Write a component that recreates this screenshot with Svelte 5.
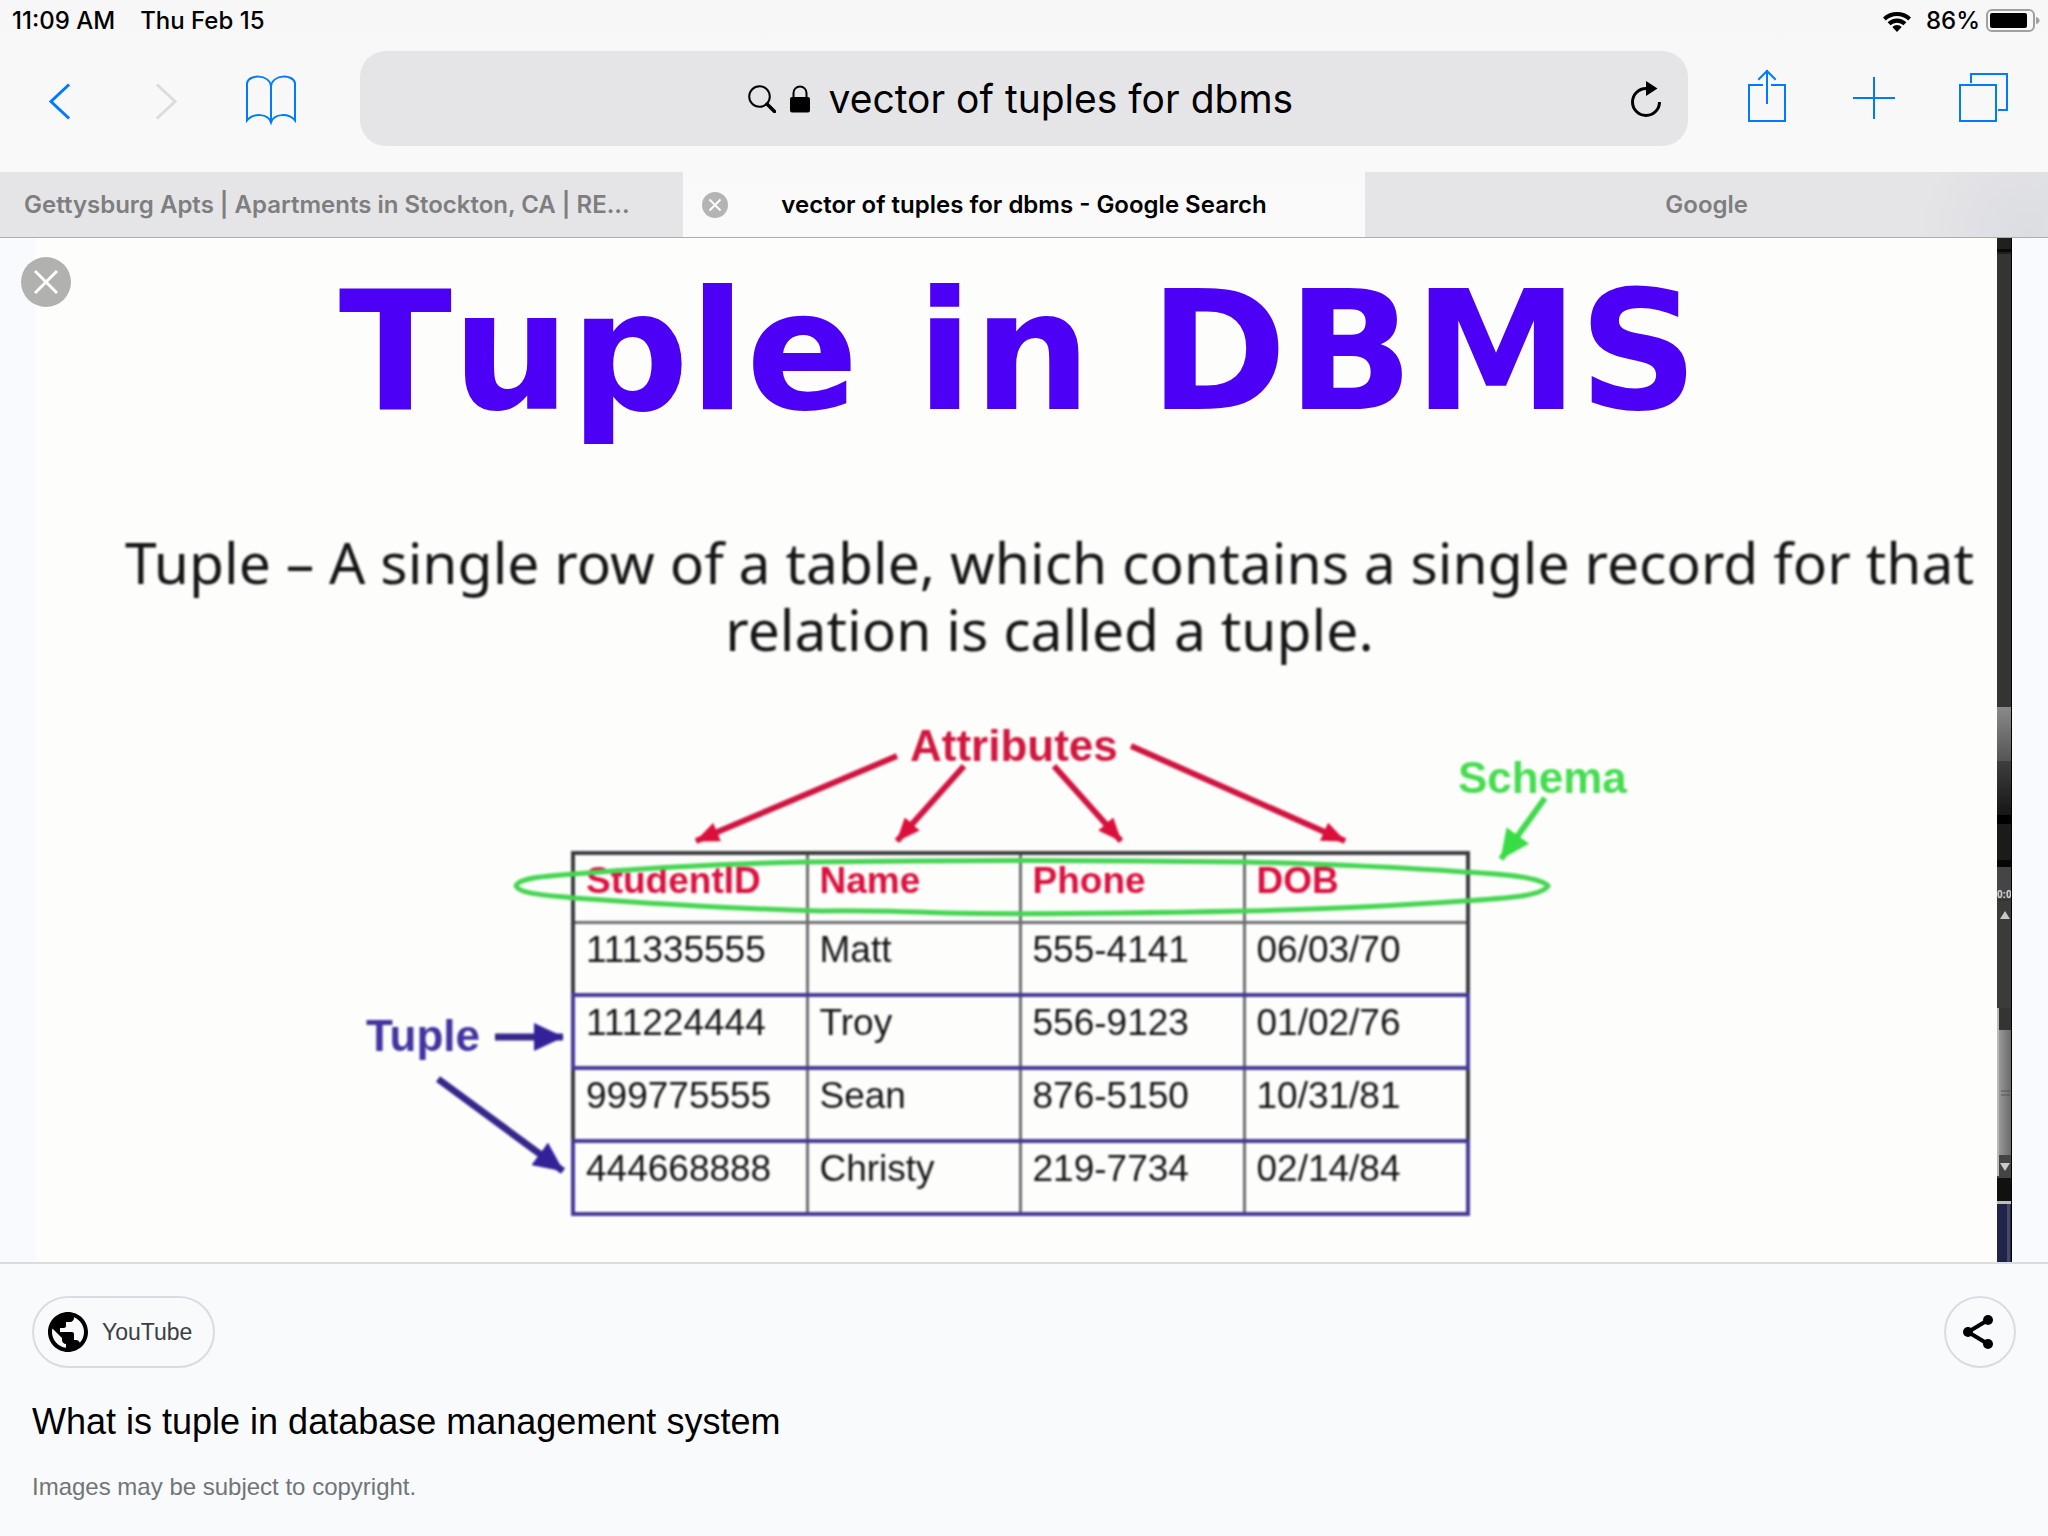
<script>
  const columns = ['StudentID', 'Name', 'Phone', 'DOB'];
  const rows = [
    { cells: ['111335555', 'Matt', '555-4141', '06/03/70'], tuple: false },
    { cells: ['111224444', 'Troy', '556-9123', '01/02/76'], tuple: true },
    { cells: ['999775555', 'Sean', '876-5150', '10/31/81'], tuple: false },
    { cells: ['444668888', 'Christy', '219-7734', '02/14/84'], tuple: true }
  ];
  let query = $state('vector of tuples for dbms');
</script>

<div class="page">
  <header>
    <div class="status">
      <div class="when"><span>11:09 AM</span><span>Thu Feb 15</span></div>
      <div class="power">
        <svg width="30" height="22" viewBox="0 0 30 22" aria-label="Wi-Fi">
          <path d="M1 7.6a20 20 0 0 1 28 0l-2.8 3a16 16 0 0 0-22.400 0z" />
          <path d="M5.600 12.300a13.400 13.400 0 0 1 18.800 0l-2.900 3a9.300 9.300 0 0 0-13 0z" />
          <path d="M10.300 17a6.700 6.700 0 0 1 9.400 0L15 22z" />
        </svg>
        <span>86%</span>
        <svg width="54" height="24" viewBox="0 0 54 24" aria-label="Battery">
          <rect x="1" y="1" width="47" height="21" rx="5" fill="none" stroke="#a0a0a0" stroke-width="2" />
          <rect x="4" y="4" width="37" height="15" rx="2" />
          <path d="M50 8q3.500 1 3.500 3.500T50 15z" fill="#a0a0a0" />
        </svg>
      </div>
    </div>

    <div class="toolbar">
      <nav class="tools left">
        <button aria-label="Back">
          <svg width="60" height="60" viewBox="0 0 60 60"><path d="M38 16.500 21 32.500l17 16" stroke-width="3" /></svg>
        </button>
        <button aria-label="Forward" disabled>
          <svg width="60" height="60" viewBox="0 0 60 60"><path d="M22 16.500 39 32.500l-17 16" stroke-width="3" /></svg>
        </button>
        <button aria-label="Bookmarks">
          <svg width="60" height="60" viewBox="0 0 60 60">
            <path d="M29 17v36M29 17C27 5 7 5 5 14v37.500C11 44 26 44 29 53.500 32 44 47 44 53 51.500V14C51 5 31 5 29 17z" />
          </svg>
        </button>
      </nav>
      <div class="address">
        <div class="query">
          <svg width="28" height="28" viewBox="0 0 28 28"><circle cx="11.500" cy="11.500" r="10.300" fill="none" stroke="#000" stroke-width="2" /><path d="m19 19 7.500 7.500" stroke="#000" stroke-width="3.500" stroke-linecap="round" /></svg>
          <svg width="22" height="28" viewBox="0 0 22 28"><path d="M4.500 13V8a6.500 6.500 0 0 1 13 0v5" fill="none" stroke="#000" stroke-width="2" /><rect x="1" y="12" width="20" height="15.500" rx="2" /></svg>
          <input type="text" aria-label="Address" bind:value={query} />
        </div>
        <button class="reload" aria-label="Reload">
          <svg width="34" height="38" viewBox="0 0 34 38"><path d="M17 8.500A13.500 13.500 0 1 0 30.500 22" fill="none" stroke="#000" stroke-width="3" /><path d="M17 1v15l11.500-7.500z" /></svg>
        </button>
      </div>
      <nav class="tools right">
        <button aria-label="Share page">
          <svg width="60" height="60" viewBox="0 0 60 60"><path d="M25 16H12v36h36V16H35M30 2v32M22 10l8-8 8 8" /></svg>
        </button>
        <button aria-label="New tab">
          <svg width="60" height="60" viewBox="0 0 60 60"><path d="M29 9v40M9 29h40" /></svg>
        </button>
        <button aria-label="All tabs">
          <svg width="60" height="60" viewBox="0 0 60 60"><path d="M7 16h36v36H7zM18 13V5h36v36h-8" /></svg>
        </button>
      </nav>
    </div>

    <nav class="tabs">
      <div class="tab first"><a href="#apartments">Gettysburg Apts | Apartments in Stockton, CA | RE...</a></div>
      <div class="tab active">
        <button aria-label="Close tab">
          <svg width="26" height="26" viewBox="0 0 26 26"><circle cx="13" cy="13" r="13" fill="#b4b4b4" /><path d="m7.500 7.500 11 11m0-11-11 11" stroke="#fff" stroke-width="2" /></svg>
        </button>
        <a href="#search">vector of tuples for dbms - Google Search</a>
      </div>
      <div class="tab last"><a href="#google">Google</a></div>
    </nav>
  </header>

  <main>
    <button class="close" aria-label="Close image">
      <svg width="50" height="50" viewBox="0 0 50 50"><circle cx="25" cy="25" r="25" fill="#b1b1b0" /><path d="m14 14 22 22m0-22L14 36" stroke="#fff" stroke-width="3" /></svg>
    </button>
    <article class="slide">
      <h1>Tuple in DBMS</h1>
      <p>Tuple – A single row of a table, which contains a single record for that<br />relation is called a tuple.</p>
      <div class="diagram">
        <table>
          <thead>
            <tr>{#each columns as name}<th scope="col">{name}</th>{/each}</tr>
          </thead>
          <tbody>
            {#each rows as row}
              <tr class:tuple={row.tuple}>{#each row.cells as cell}<td>{cell}</td>{/each}</tr>
            {/each}
          </tbody>
        </table>
        <svg class="marks" width="1321" height="510" viewBox="356 720 1321 510">
          <defs>
            <marker id="red" markerUnits="userSpaceOnUse" markerWidth="24" markerHeight="20" refX="23" refY="10" orient="auto"><path d="M0 0 24 10 0 20z" fill="#dc0f3c" /></marker>
            <marker id="green" markerUnits="userSpaceOnUse" markerWidth="30" markerHeight="28" refX="29" refY="14" orient="auto"><path d="M0 0 30 14 0 28z" fill="#38dc45" /></marker>
            <marker id="blue" markerUnits="userSpaceOnUse" markerWidth="30" markerHeight="28" refX="29" refY="14" orient="auto"><path d="M0 0 30 14 0 28z" fill="#33219a" /></marker>
          </defs>
          <g stroke="#cf1440" stroke-width="6">
            <path d="M897 756 696 841" marker-end="url(#red)" />
            <path d="M964 766 897 841" marker-end="url(#red)" />
            <path d="m1054 766 67 75" marker-end="url(#red)" />
            <path d="m1131 746 214 95" marker-end="url(#red)" />
          </g>
          <path d="m1545 798-44 61" stroke="#42d84e" stroke-width="6" marker-end="url(#green)" />
          <g stroke="#35268a" stroke-width="7">
            <path d="M495 1037h68" marker-end="url(#blue)" />
            <path d="m438 1079 125 92" marker-end="url(#blue)" />
          </g>
          <path d="M516 886c2-8 30-10 58-12q120-10 233-12 220-3 437 0 120 3 220 10c60 3 80 8 84 14-6 10-40 12-84 15q-120 8-220 10-200 4-298 2-80-3-125-2-110-3-247-13c-30-3-54-4-58-12z" fill="none" stroke="#46d552" stroke-width="5" />
        </svg>
        <span class="label attributes">Attributes</span>
        <span class="label schema">Schema</span>
        <span class="label tuples">Tuple</span>
      </div>
    </article>
    <svg class="edge" viewBox="0 0 15 1024" width="15" height="1024" preserveAspectRatio="none" aria-hidden="true">
      <defs>
        <linearGradient id="g1" x2="0" y2="1"><stop stop-color="#8a8a8a" /><stop offset="1" stop-color="#555" /></linearGradient>
        <linearGradient id="g2" x2="0" y2="1"><stop stop-color="#3e3e3e" /><stop offset="1" stop-color="#161616" /></linearGradient>
        <linearGradient id="g3"><stop stop-color="#a0a0a0" /><stop offset="1" stop-color="#666" /></linearGradient>
      </defs>
      <rect width="15" height="1024" fill="#343533" />
      <rect width="15" height="16" fill="#20211f" />
      <rect y="11" width="15" height="3" fill="#0a0a0a" />
      <rect y="469" width="15" height="54" fill="url(#g1)" />
      <rect y="523" width="15" height="54" fill="url(#g2)" />
      <rect y="577" width="15" height="9" fill="#000" />
      <rect y="586" width="15" height="36" fill="#1b1b1a" />
      <rect y="622" width="15" height="7" fill="#060606" />
      <rect y="629" width="15" height="32" fill="#454545" />
      <rect y="663" width="15" height="107" fill="#3b3b3a" />
      <text x="0" y="660" class="clock">0:0</text>
      <path d="M3 681h10l-5-8z" fill="#c9c9c9" />
      <rect y="792" width="15" height="125" fill="url(#g3)" />
      <path d="M4 853h9M4 857h9" stroke="#555" />
      <rect y="917" width="15" height="23" fill="#444" />
      <path d="M3 925h10l-5 8z" fill="#c9c9c9" />
      <rect y="770" width="2" height="168" fill="#b8b8b8" />
      <rect y="940" width="15" height="24" fill="#11120f" />
      <rect y="963" width="15" height="3" fill="#bdbdc5" />
      <rect y="966" width="15" height="58" fill="#20234a" />
      <rect x="10" y="966" width="3" height="58" fill="#454966" />
      <rect x="14" width="1" height="1024" fill="#000" />
    </svg>
  </main>

  <footer>
    <div class="actions">
      <a class="source" href="#youtube">
        <svg width="48" height="48" viewBox="0 0 24 24"><path d="M12 2C6.480 2 2 6.480 2 12s4.480 10 10 10 10-4.480 10-10S17.520 2 12 2zm-1 17.930c-3.950-.490-7-3.850-7-7.930 0-.620.080-1.210.210-1.790L9 15v1c0 1.100.900 2 2 2v1.930zm6.900-2.540c-.260-.810-1-1.390-1.900-1.390h-1v-3c0-.550-.450-1-1-1H8v-2h2c.550 0 1-.450 1-1V7h2c1.100 0 2-.900 2-2v-.410c2.930 1.190 5 4.060 5 7.410 0 2.080-.800 3.970-2.100 5.390z" /></svg>
        YouTube
      </a>
      <button class="share" aria-label="Share image">
        <svg width="36" height="36" viewBox="0 0 36 36"><path d="M26 6 6 18l20 12" fill="none" stroke="#000" stroke-width="4" /><circle cx="26" cy="6" r="5" /><circle cx="6" cy="18" r="5" /><circle cx="26" cy="30" r="5" /></svg>
      </button>
    </div>
    <h2>What is tuple in database management system</h2>
    <p>Images may be subject to copyright.</p>
  </footer>
</div>

<style>
  :global(body) { margin: 0; background: #f9fafc; }
  .page { min-height: 100vh; display: flex; flex-direction: column; font-family: "Liberation Sans", Arial, sans-serif; color: #000; }
  svg { display: block; flex: none; }
  button { border: 0; padding: 0; background: none; color: inherit; display: grid; place-items: center; }
  a { color: inherit; text-decoration: none; }

  header { background: linear-gradient(#f7f7f7, #f9faf9); border-bottom: 1px solid #adadaf; font-family: Inter, sans-serif; }
  .status { height: 41px; padding: 0 8px 0 12px; display: flex; justify-content: space-between; align-items: center; font-size: 24px; font-weight: 500; }
  .when { display: flex; gap: 25px; }
  .power { display: flex; align-items: center; gap: 6px; }
  .power span { margin-left: 8px; }

  .toolbar { display: flex; padding: 10px 0 26px; }
  .tools { display: flex; align-items: center; }
  .tools svg { fill: none; stroke: #007aff; stroke-width: 2; stroke-linecap: square; }
  .tools button:disabled svg { stroke: #dcdcdc; }
  .left { padding: 0 35px 0 7px; }
  .left button { width: 106px; }
  .right { padding: 0 11px 0 25px; }
  .right button { width: 108px; }
  .address { flex: 1; height: 95px; border-radius: 26px; background: #e5e5e7; display: grid; grid-template-columns: 1fr auto 1fr; align-items: center; }
  .query { grid-column: 2; display: flex; align-items: center; gap: 13px; }
  .query input { width: 472px; border: 0; padding: 0; margin-left: 5px; background: none; color: #000; font: 400 39px/52px Inter, sans-serif; }
  .reload { justify-self: end; margin-right: 25px; }

  .tabs { display: grid; grid-template-columns: repeat(3, 1fr); }
  .tab { height: 65px; display: grid; grid-template-columns: 26px 1fr 26px; align-items: center; padding: 0 19px; background: #e5e5e7; color: #7e7e80; font-size: 24px; font-weight: 600; text-align: center; white-space: nowrap; }
  .tab a { grid-column: 2; }
  .first { grid-template-columns: 0 1fr 0; padding: 0 24px; text-align: left; }
  .active { background: none; color: #000; }
  .last { background: radial-gradient(circle at 97% 90%, #dcdde2, #e5e5e7 110px); }

  main { flex: 1; position: relative; display: flex; padding: 0 36px; background: #f9fafd; border-bottom: 2px solid #dadce0; }
  .close { position: absolute; left: 21px; top: 19px; z-index: 1; }
  .slide { flex: 1; background: #fdfefc; overflow: hidden; }
  .edge { height: auto; align-self: stretch; }
  .clock { font: 700 10px "Liberation Sans", sans-serif; fill: #ddd; }
  .slide h1 { margin: 0; padding: 14px 0 0 4px; text-align: center; font: 700 166px/200px "DejaVu Sans", Verdana, sans-serif; font-kerning: none; color: #4c00f5; white-space: nowrap; }
  .slide p { margin: 0; padding: 77px 0 0 66px; text-align: center; font: 400 57px/67px "Noto Sans", Verdana, sans-serif; color: #161616; white-space: nowrap; filter: blur(1px); }

  .diagram { position: relative; box-sizing: border-box; width: 1321px; height: 510px; margin: 57px auto 0; padding-top: 131px; filter: blur(1px); }
  table { border-collapse: collapse; table-layout: fixed; width: 899px; margin-left: 215px; border: 4px solid #3c3c40; color: #161618; font-size: 37px; line-height: 42px; }
  th, td { box-sizing: border-box; height: 73px; padding: 5px 0 0 11px; border: 3px solid #6e6e72; text-align: left; vertical-align: top; }
  th { height: 69px; color: #d9123f; font-weight: 700; }
  th:nth-child(1) { width: 234px; }
  th:nth-child(2) { width: 213px; }
  th:nth-child(3) { width: 224px; }
  tr.tuple { border: 4px solid #463a98; }
  tr.tuple td { border-top: 4px solid #463a98; border-bottom: 4px solid #463a98; }
  .marks { position: absolute; inset: 0; }
  .label { position: absolute; font-size: 44px; line-height: 48px; font-weight: 700; }
  .attributes { left: 554px; top: 2px; color: #d0173f; }
  .schema { left: 1102px; top: 34px; color: #46dc50; }
  .tuples { left: 10px; top: 292px; color: #4133a0; }

  footer { padding: 32px 32px 33px; }
  .actions { display: flex; justify-content: space-between; }
  .source { box-sizing: border-box; height: 72px; padding: 0 21px 0 10px; display: flex; align-items: center; gap: 10px; border: 2px solid #dadce0; border-radius: 36px; font-size: 23px; color: #3c4043; }
  .source svg { fill: #000; }
  .share { width: 72px; height: 72px; border: 2px solid #dadce0; border-radius: 50%; }
  h2 { margin: 33px 0 0; font-size: 36px; line-height: 42px; font-weight: 400; }
  footer p { margin: 28px 0 0; font-size: 24px; line-height: 32px; color: #70757a; }
</style>
